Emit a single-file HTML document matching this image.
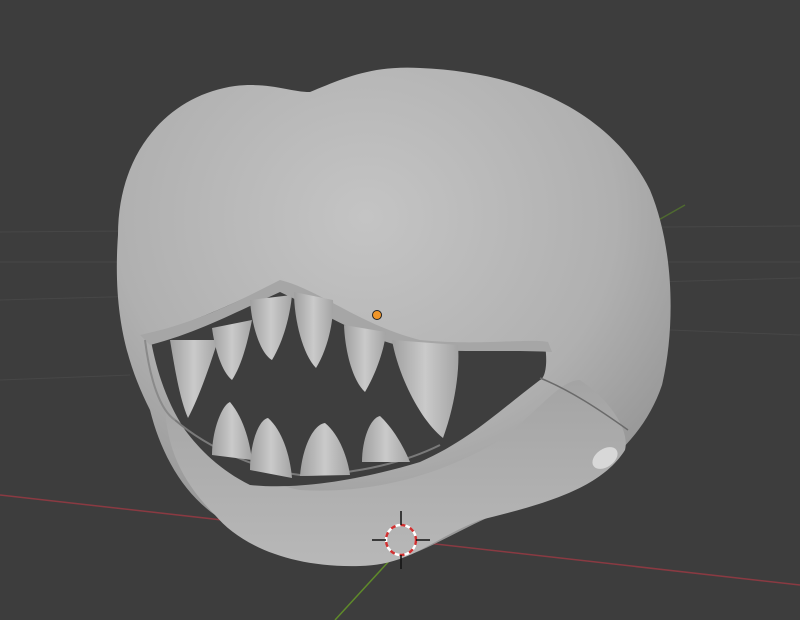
<!DOCTYPE html>
<html><head><meta charset="utf-8"><style>
html,body{margin:0;padding:0;background:#3d3d3d;width:800px;height:620px;overflow:hidden}
svg{display:block}
</style></head><body>
<svg width="800" height="620" viewBox="0 0 800 620" xmlns="http://www.w3.org/2000/svg">
<defs>
<radialGradient id="head" cx="0.45" cy="0.3" r="0.75">
<stop offset="0" stop-color="#c4c4c4"/>
<stop offset="0.6" stop-color="#b0b0b0"/>
<stop offset="1" stop-color="#8e8e8e"/>
</radialGradient>
<linearGradient id="jaw" x1="0" y1="0" x2="0" y2="1">
<stop offset="0" stop-color="#a4a4a4"/>
<stop offset="1" stop-color="#b8b8b8"/>
</linearGradient>
<linearGradient id="tooth" x1="0" y1="0" x2="1" y2="0">
<stop offset="0" stop-color="#a0a0a0"/>
<stop offset="0.5" stop-color="#cacaca"/>
<stop offset="1" stop-color="#a4a4a4"/>
</linearGradient>
</defs>
<rect width="800" height="620" fill="#3d3d3d"/>
<g stroke="#474747" stroke-width="1">
<line x1="0" y1="232" x2="800" y2="226"/>
<line x1="0" y1="262" x2="800" y2="262"/>
<line x1="0" y1="300" x2="800" y2="278"/>
<line x1="670" y1="330" x2="800" y2="335"/>
<line x1="0" y1="380" x2="130" y2="375"/>
</g>
<line x1="0" y1="495" x2="800" y2="585" stroke="#8a3a42" stroke-width="1.5"/>
<line x1="335" y1="620" x2="390" y2="560" stroke="#5f8a2a" stroke-width="1.5"/>
<line x1="655" y1="222" x2="685" y2="205" stroke="#4f6a30" stroke-width="1.5"/>
<path d="M118,235 C118,150 170,95 235,86 C270,82 290,92 310,92 C340,80 370,65 420,68 C520,72 610,110 650,190 C675,250 675,330 662,385 C640,450 580,490 520,505 C460,525 420,560 370,565 C300,570 240,540 215,515 C180,490 160,450 150,410 C130,370 112,320 118,235 Z" fill="url(#head)"/>
<path d="M165,400 C190,440 250,480 300,490 C380,495 450,470 500,440 C540,410 560,380 580,380 C610,400 630,430 625,450 C600,490 540,505 480,520 C430,540 410,565 360,566 C290,568 240,545 215,515 C185,485 165,450 165,400 Z" fill="url(#jaw)"/>
<path d="M150,335 C200,320 240,300 280,282 C310,290 360,330 420,345 C480,348 530,340 545,345 C548,365 545,378 540,380 C500,410 470,440 420,462 C360,480 300,490 250,485 C220,470 200,450 185,430 C165,400 155,365 150,335 Z" fill="#3e3e3e"/>
<path d="M175,420 C210,450 260,470 300,475 C360,475 410,460 440,445" stroke="#7a7a7a" stroke-width="2" fill="none"/>
<path d="M140,335 C200,322 240,300 280,280 C320,290 360,325 420,340 C480,346 530,338 548,342 L552,352 C520,350 470,352 420,350 C360,340 320,310 280,292 C240,310 200,332 150,345 Z" fill="#a6a6a6"/>
<g fill="url(#tooth)">
<path d="M170,340 C175,370 180,400 188,418 C200,395 210,365 218,340 Z"/>
<path d="M212,328 C215,350 222,372 232,380 C242,365 248,340 252,320 Z"/>
<path d="M250,300 C252,330 262,355 272,360 C284,340 290,315 292,295 Z"/>
<path d="M294,292 C294,320 303,355 316,368 C330,345 334,315 333,300 Z"/>
<path d="M344,325 C345,350 352,380 365,392 C378,370 385,345 386,332 Z"/>
<path d="M392,340 C398,375 420,420 443,438 C455,405 460,370 458,345 Z"/>
</g>
<g fill="url(#tooth)">
<path d="M212,455 C212,430 222,405 230,402 C245,420 250,445 252,460 Z"/>
<path d="M250,470 C250,445 258,420 268,418 C282,430 290,455 292,478 Z"/>
<path d="M300,476 C302,450 312,425 325,423 C340,435 348,460 350,475 Z"/>
<path d="M362,462 C362,440 370,418 380,416 C395,430 405,450 410,462 Z"/>
</g>
<path d="M540,378 C570,390 600,410 628,430" stroke="#6a6a6a" stroke-width="1.5" fill="none"/>
<ellipse cx="605" cy="458" rx="14" ry="9" fill="#d8d8d8" transform="rotate(-35 605 458)"/>
<path d="M145,340 C150,380 160,410 175,420" stroke="#8a8a8a" stroke-width="2" fill="none"/>
<circle cx="377" cy="315" r="4.5" fill="#f0962a" stroke="#222" stroke-width="1"/>
<g>
<circle cx="401" cy="540" r="15" fill="none" stroke="#fff" stroke-width="2.5"/>
<circle cx="401" cy="540" r="15" fill="none" stroke="#d03030" stroke-width="2.5" stroke-dasharray="5 5"/>
<line x1="372" y1="540" x2="386" y2="540" stroke="#111" stroke-width="1.5"/>
<line x1="416" y1="540" x2="430" y2="540" stroke="#111" stroke-width="1.5"/>
<line x1="401" y1="511" x2="401" y2="525" stroke="#111" stroke-width="1.5"/>
<line x1="401" y1="555" x2="401" y2="569" stroke="#111" stroke-width="1.5"/>
</g>
</svg>
</body></html>
